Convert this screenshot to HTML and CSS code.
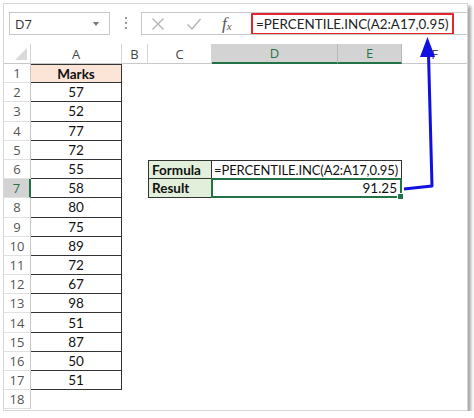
FILE: index.html
```html
<!DOCTYPE html>
<html>
<head>
<meta charset="utf-8">
<link rel="stylesheet" href="styles.css">
</head>
<body>
<div class="window">
  <div class="fbar">
    <div class="namebox"><span class="nb-text">D7</span><span class="nb-arrow"></span></div>
    <div class="dots"><i></i><i></i><i></i></div>
    <div class="finput">
      <svg class="ico ico-x" width="14" height="14" viewBox="0 0 14 14"><path d="M1.5 1.5 L12.5 12.5 M12.5 1.5 L1.5 12.5" stroke="#b3b3b3" stroke-width="1.4" fill="none"/></svg>
      <svg class="ico ico-check" width="16" height="14" viewBox="0 0 16 14"><path d="M1.5 7.5 L6 12 L14.5 2" stroke="#b3b3b3" stroke-width="1.4" fill="none"/></svg>
      <span class="fx">f<sub>x</sub></span>
      <div class="ftext">=PERCENTILE.INC(A2:A17,0.95)</div>
    </div>
  </div>
  <div class="sheet">
    <div class="corner"><span class="tri"></span></div>
    <div class="ch">A</div>
    <div class="ch">B</div>
    <div class="ch">C</div>
    <div class="ch sel">D</div>
    <div class="ch sel">E</div>
    <div class="ch last">F</div>

    <div class="rh">1</div><div class="ca top head">Marks</div><div class="blank"></div>
    <div class="rh">2</div><div class="ca">57</div><div class="blank"></div>
    <div class="rh">3</div><div class="ca">52</div><div class="blank"></div>
    <div class="rh">4</div><div class="ca">77</div><div class="blank"></div>
    <div class="rh">5</div><div class="ca">72</div><div class="blank"></div>
    <div class="rh">6</div><div class="ca">55</div><div class="empty"></div><div class="lbl lbl-top">Formula</div><div class="formula">=PERCENTILE.INC(A2:A17,0.95)</div><div class="empty"></div>
    <div class="rh sel">7</div><div class="ca">58</div><div class="empty"></div><div class="lbl">Result</div><div class="result">91.25<span class="handle"></span></div><div class="empty"></div>
    <div class="rh">8</div><div class="ca">80</div><div class="blank"></div>
    <div class="rh">9</div><div class="ca">75</div><div class="blank"></div>
    <div class="rh">10</div><div class="ca">89</div><div class="blank"></div>
    <div class="rh">11</div><div class="ca">72</div><div class="blank"></div>
    <div class="rh">12</div><div class="ca">67</div><div class="blank"></div>
    <div class="rh">13</div><div class="ca">98</div><div class="blank"></div>
    <div class="rh">14</div><div class="ca">51</div><div class="blank"></div>
    <div class="rh">15</div><div class="ca">87</div><div class="blank"></div>
    <div class="rh">16</div><div class="ca">50</div><div class="blank"></div>
    <div class="rh">17</div><div class="ca">51</div><div class="blank"></div>
    <div class="rh">18</div><div class="empty18"></div>
  </div>
  <svg class="arrow" width="474" height="418" viewBox="0 0 474 418">
    <path d="M404 189 L432 186 L428.5 54" stroke="#1010e0" stroke-width="3" fill="none" stroke-linejoin="round"/>
    <polygon points="427.5,37 420,57 435,57" fill="#1010e0"/>
  </svg>
</div>
</body>
</html>
```

FILE: styles.css
```css
html, body {
  margin: 0;
  padding: 0;
  background: #ffffff;
}

.window {
  position: relative;
  margin: 3px 0 0 3px;
  width: 463px;
  height: 406px;
  border: 1px solid #d6d6d6;
  background: #ffffff;
  box-shadow: 3px 3px 3px rgba(0, 0, 0, 0.35);
  overflow: hidden;
}

.fbar {
  height: 40px;
  display: flex;
  align-items: flex-start;
  padding: 8px 0 0 5px;
  box-sizing: border-box;
}

.namebox {
  flex: 0 0 101px;
  height: 23px;
  box-sizing: border-box;
  border: 1px solid #c8c8c8;
  display: flex;
  align-items: center;
  justify-content: space-between;
  padding: 0 10px 0 5px;
  font-family: "Open Sans", "DejaVu Sans", sans-serif;
  font-size: 13px;
  color: #333;
}

.nb-arrow {
  width: 0;
  height: 0;
  border-left: 3.5px solid transparent;
  border-right: 3.5px solid transparent;
  border-top: 4px solid #777;
}

.dots {
  flex: 0 0 31px;
  display: flex;
  flex-direction: column;
  align-items: center;
  gap: 3px;
  padding-top: 5px;
}

.dots i {
  display: block;
  width: 2px;
  height: 2px;
  background: #9a9a9a;
}

.finput {
  flex: 1 1 0;
  min-width: 0;
  overflow: hidden;
  height: 23px;
  box-sizing: border-box;
  border: 1px solid #c8c8c8;
  border-right: none;
  display: flex;
  align-items: center;
  padding-left: 9px;
  position: relative;
}

.ico { flex: none; }
.ico-x { margin-right: 21px; }
.ico-check { margin-right: 20px; }

.fx {
  flex: none;
  width: 12px;
  font-family: "Liberation Serif", "DejaVu Serif", serif;
  font-style: italic;
  font-size: 17px;
  color: #555;
  line-height: 1;
  margin-right: 17px;
  white-space: nowrap;
}

.fx sub {
  font-size: 11px;
  vertical-align: -1px;
}

.ftext {
  flex: none;
  width: 203px;
  height: 22px;
  box-sizing: border-box;
  border: 2px solid #e3262d;
  border-radius: 1px;
  padding: 0 0 0 3px;
  display: flex;
  align-items: center;
  font-family: "Lato", "Liberation Sans", sans-serif;
  font-size: 13.4px;
  color: #222;
  margin-top: 1px;
  white-space: nowrap;
}

.sheet {
  display: grid;
  grid-template-columns: 27px 91px 26px 64px 126px 64px 1fr;
  grid-template-rows: 20px repeat(18, 19.2px);
  font-family: "Lato", "Liberation Sans", sans-serif;
  font-size: 13.5px;
  color: #111;
}

.corner {
  border-right: 1px solid #d4d4d4;
  border-bottom: 1px solid #c8c8c8;
  position: relative;
}

.tri {
  position: absolute;
  right: 3px;
  bottom: 3px;
  width: 0;
  height: 0;
  border-left: 12px solid transparent;
  border-bottom: 12px solid #dadada;
}

.ch {
  display: flex;
  align-items: center;
  justify-content: center;
  border-right: 1px solid #d4d4d4;
  border-bottom: 1px solid #c8c8c8;
  font-family: "Open Sans", "DejaVu Sans", sans-serif;
  font-size: 13px;
  color: #444;
}

.ch.last { border-right: none; }

.ch.sel {
  background: #d3d3d3;
  color: #217346;
  border-bottom: 2px solid #217346;
  border-right-color: #b8b8b8;
}

.rh {
  display: flex;
  align-items: center;
  justify-content: center;
  border-right: 1px solid #c8c8c8;
  border-bottom: 1px solid #e1e1e1;
  font-family: "Open Sans", "DejaVu Sans", sans-serif;
  font-size: 13px;
  color: #555;
}

.rh.sel {
  background: #d3d3d3;
  color: #217346;
  border-right: 2px solid #217346;
}

.ca {
  display: flex;
  align-items: center;
  justify-content: center;
  border-right: 1px solid #333;
  border-bottom: 1px solid #333;
}

.ca.top { border-top: 1px solid #333; }

.ca.head {
  background: #fce4d6;
  font-weight: bold;
}

.blank { grid-column: span 5; }
.empty18 { grid-column: span 6; }

.lbl {
  display: flex;
  align-items: center;
  padding-left: 3px;
  background: #e2efda;
  font-weight: bold;
  border-left: 1px solid #333;
  border-right: 1px solid #333;
  border-bottom: 1px solid #333;
}

.lbl-top { border-top: 1px solid #333; }

.formula {
  grid-column: span 2;
  display: flex;
  align-items: center;
  padding-left: 2px;
  font-size: 13px;
  letter-spacing: -0.1px;
  border-top: 1px solid #333;
  border-right: 1px solid #333;
  border-bottom: 1px solid #333;
  white-space: nowrap;
}

.result {
  grid-column: span 2;
  position: relative;
  display: flex;
  align-items: center;
  justify-content: flex-end;
  padding-right: 3px;
  border: 2px solid #217346;
  margin: -1px 0 0 -1px;
}

.handle {
  position: absolute;
  right: -4px;
  bottom: -4px;
  width: 5px;
  height: 5px;
  background: #217346;
  border: 1px solid #fff;
}

.arrow {
  position: absolute;
  left: -4px;
  top: -4px;
  pointer-events: none;
}
```
